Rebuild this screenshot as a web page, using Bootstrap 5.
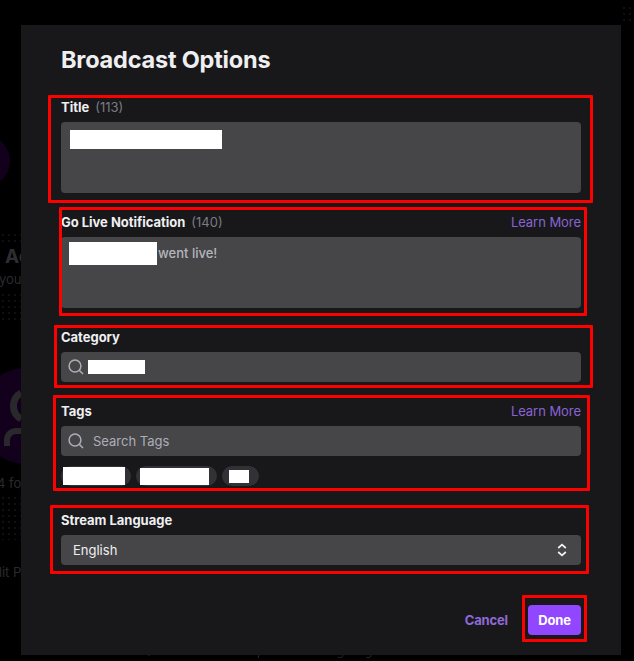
<!doctype html>
<html lang="en">
<head>
<meta charset="utf-8">
<title>Broadcast Options</title>
<link href="https://cdn.jsdelivr.net/npm/bootstrap@5.3.0/dist/css/bootstrap.min.css" rel="stylesheet">
<style>
html,body{margin:0;background:#000;font-family:Inter,"Liberation Sans",sans-serif;overflow:hidden}
.stage{position:relative;width:634px;height:661px;overflow:hidden;background:#000}
.bg-art{position:absolute;inset:0}
.bg-txt{position:absolute;white-space:nowrap;color:#2a2a2e;font-size:13px;line-height:16px}
.t-ac{left:5px;top:246px;font-size:19px;line-height:22px;font-weight:700;color:#2e2e32}
.t-you{left:-1px;top:271px}
.t-fo{left:-3px;top:475px}
.t-dit{left:-6px;top:564px}
.dots{position:absolute;background-image:radial-gradient(circle,#101014 0.7px,transparent 1px);background-size:6px 6px}
.d1{left:0;width:21px;top:232px;height:14px}.d2{left:0;width:21px;top:292px;height:30px}
.d4{left:0;width:21px;top:495px;height:45px}
.d5{left:621px;width:13px;top:5px;height:20px}
.dlg{position:absolute;left:21px;top:25px;width:600px;height:630px;background:#18181b;border:0;border-radius:0;padding:20px 40px 0;color:#efeff1}
.dlg-title{font-size:23.5px;line-height:30px;font-weight:700;margin:0 0 22px;color:#efeff1;letter-spacing:-.2px}
.fld{margin-bottom:19px}
.fld-wide{margin-bottom:24px}
.lbl-row{height:20px;margin-bottom:5px}
.lbl{font-size:13px;line-height:20px;font-weight:700;margin:0;color:#efeff1;letter-spacing:-.02px}
.cnt{font-size:13px;font-weight:400;color:#7b7b82;margin-left:6px;letter-spacing:0}
.lrn{font-size:13px;line-height:20px;color:#8a63d2;text-decoration:none;letter-spacing:-.05px}
.inp{background:#464649;border:0;border-radius:4px;color:#adadb8;font-size:13px;line-height:20px;padding:0 8px;box-shadow:none}
.inp:focus{background:#464649;color:#adadb8;box-shadow:none}
.inp-tall{height:71px;padding:8px 9px;display:block}
.inp-notif{height:71px;padding:5px 8px;font-weight:500;color:#b5b5bd}
.notif-txt{margin-top:1px}
.inp-line{height:30px;padding:0 7px}
.inp-line input{background:transparent;border:0;outline:0;color:#adadb8;font-size:13px;padding:0;width:100%;margin-left:-1px}
.inp-line input::placeholder{color:#adadb8;opacity:1}
.inp-sel{height:30px;padding:0 12px;color:#efeff1;background-image:url("data:image/svg+xml,%3Csvg xmlns='http://www.w3.org/2000/svg' width='10' height='14' viewBox='0 0 10 14'%3E%3Cpath d='M1.2 5 5 1.6 8.8 5M1.2 9 5 12.4 8.8 9' fill='none' stroke='%23efeff1' stroke-width='1.8'/%3E%3C/svg%3E");background-repeat:no-repeat;background-position:right 14px center;background-size:10px 14px}
.inp-sel:focus{color:#efeff1}
.wipe{display:block;background:#fff}
.w-title{width:152px;height:19px}
.w-notif{width:88px;height:23px;margin-right:1px}
.w-cat{width:57px;height:14px;margin-left:-6px}
.ic{flex:none;width:16px;height:16px}
.ic-gap{gap:10px}
.tag-row{margin-top:10px;gap:5px;height:20px}
.pill{height:20px;background:#323236;border-radius:10px;display:flex;align-items:center}
.p1{width:70px;padding-left:2px}.p2{width:81px;padding-left:4px}.p3{width:37px;padding-left:7px}
.w-p1{width:62px;height:18px}.w-p2{width:69px;height:17px}.w-p3{width:20px;height:13px}
.foot{margin-top:40px;gap:20px;padding:0;border:0}
.act{font-size:13px;line-height:20px;font-weight:700;border:0;border-radius:4px;padding:0;letter-spacing:-.15px}
.act-cancel{color:#9068d8;background:transparent}
.act-done{width:53px;height:30px;color:#fff;background:#9147ff}
.act-done:hover,.act-cancel:hover{color:#fff}
.rbox{position:absolute;border:3px solid #f00;border-radius:1px;pointer-events:none}
.r1{left:48px;top:95px;width:545px;height:108px}
.r2{left:59px;top:207px;width:528px;height:109px}
.r3{left:54px;top:325px;width:539px;height:63px}
.r4{left:53px;top:395px;width:537px;height:96px}
.r5{left:50px;top:505px;width:539px;height:69px}
.r6{left:522px;top:595px;width:65px;height:47px}
</style>
</head>
<body>
<div class="stage">
  <svg class="bg-art" width="634" height="661" viewBox="0 0 634 661" aria-hidden="true">
    <circle cx="-16" cy="161" r="26" fill="#12001c"/>
    <circle cx="26" cy="416" r="48" fill="#12001c"/>
    <path d="M21 393a15 15 0 0 0 0 26" fill="none" stroke="#29292c" stroke-width="7"/>
    <path d="M7 446v-6a9 9 0 0 1 9-9h6" fill="none" stroke="#29292c" stroke-width="6"/>
    <path d="M149 655v1M259 655l-1 3M343 655c0 3-4 3-5 2M371 655c0 3-4 3-5 2" fill="none" stroke="#2a2a2e" stroke-width="1"/>
  </svg>
  <div class="dots d1"></div><div class="dots d2"></div><div class="dots d4"></div><div class="dots d5"></div>
  <span class="bg-txt t-ac">Ac</span>
  <span class="bg-txt t-you">you</span>
  <span class="bg-txt t-fo">4 fo</span>
  <span class="bg-txt t-dit">dit P</span>

  <div class="modal-content dlg">
    <h1 class="dlg-title">Broadcast Options</h1>

    <div class="fld">
      <div class="lbl-row d-flex align-items-center"><label class="lbl">Title<span class="cnt">(113)</span></label></div>
      <div class="form-control inp inp-tall"><span class="wipe w-title"></span></div>
    </div>

    <div class="fld">
      <div class="lbl-row d-flex align-items-center justify-content-between">
        <label class="lbl">Go Live Notification<span class="cnt">(140)</span></label>
        <a class="lrn" href="#">Learn More</a>
      </div>
      <div class="form-control inp inp-notif d-flex align-items-start"><span class="wipe w-notif"></span><span class="notif-txt">went live!</span></div>
    </div>

    <div class="fld">
      <div class="lbl-row d-flex align-items-center"><label class="lbl">Category</label></div>
      <div class="form-control inp inp-line d-flex align-items-center ic-gap">
        <svg class="ic" viewBox="0 0 16 16" fill="none" stroke="#adadb8" stroke-width="1.5"><circle cx="7" cy="7" r="5.9"/><path d="m11.2 11.2 3.8 3.8"/></svg>
        <span class="wipe w-cat"></span>
      </div>
    </div>

    <div class="fld-wide">
      <div class="lbl-row d-flex align-items-center justify-content-between">
        <label class="lbl">Tags</label>
        <a class="lrn" href="#">Learn More</a>
      </div>
      <div class="form-control inp inp-line d-flex align-items-center ic-gap">
        <svg class="ic" viewBox="0 0 16 16" fill="none" stroke="#adadb8" stroke-width="1.5"><circle cx="7" cy="7" r="5.9"/><path d="m11.2 11.2 3.8 3.8"/></svg>
        <input type="text" placeholder="Search Tags">
      </div>
      <div class="d-flex tag-row">
        <span class="pill p1"><span class="wipe w-p1"></span></span>
        <span class="pill p2"><span class="wipe w-p2"></span></span>
        <span class="pill p3"><span class="wipe w-p3"></span></span>
      </div>
    </div>

    <div>
      <div class="lbl-row d-flex align-items-center"><label class="lbl">Stream Language</label></div>
      <select class="form-select inp inp-sel"><option>English</option></select>
    </div>

    <div class="d-flex justify-content-end align-items-center foot">
      <button type="button" class="btn act act-cancel">Cancel</button>
      <button type="button" class="btn act act-done">Done</button>
    </div>
  </div>

  <div class="rbox r1"></div>
  <div class="rbox r2"></div>
  <div class="rbox r3"></div>
  <div class="rbox r4"></div>
  <div class="rbox r5"></div>
  <div class="rbox r6"></div>
</div>
<script src="https://cdn.jsdelivr.net/npm/bootstrap@5.3.0/dist/js/bootstrap.bundle.min.js"></script>
</body>
</html>
